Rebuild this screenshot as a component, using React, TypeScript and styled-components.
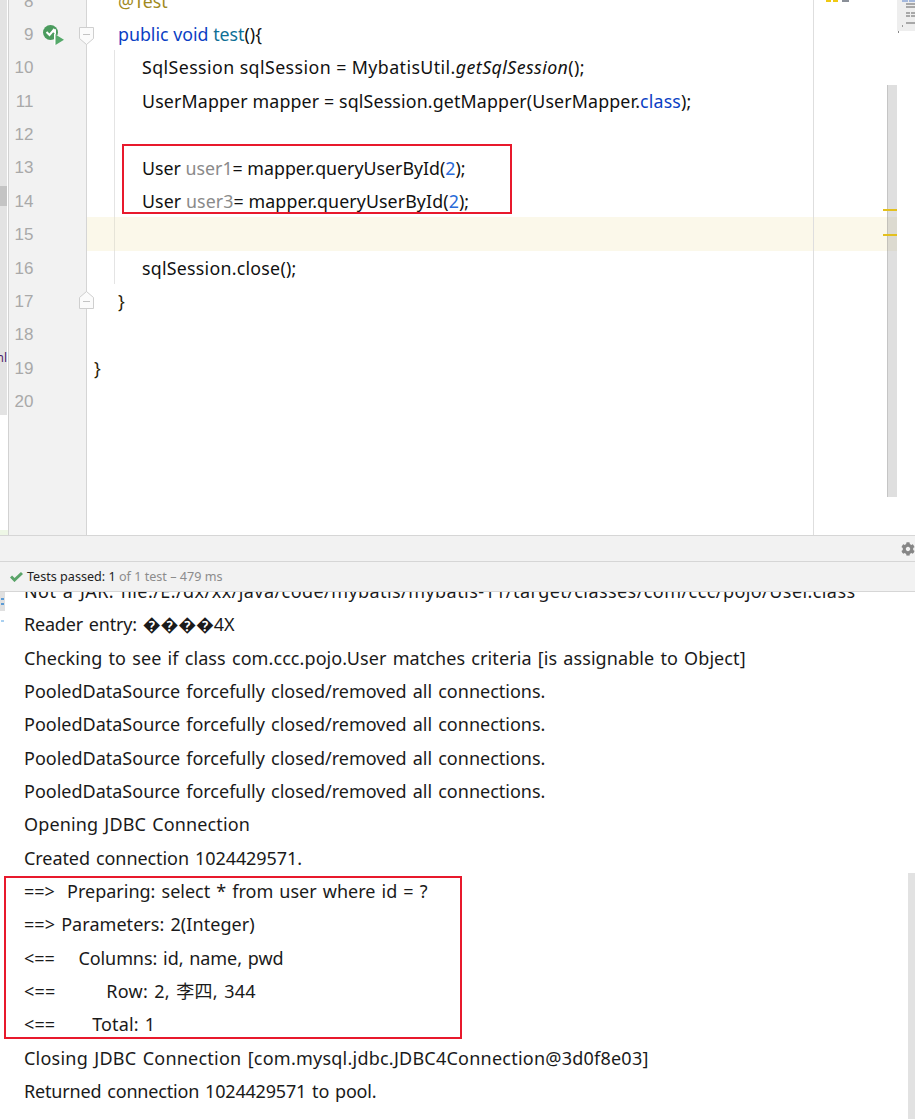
import React from "react";
import styled, { createGlobalStyle } from "styled-components";
import { FaCog } from "react-icons/fa";

const Global = createGlobalStyle`
  html, body { margin: 0; padding: 0; background: #fff; }
  body { width: 915px; height: 1119px; overflow: hidden; }
`;

const FONT = `"Noto Sans", "Noto Sans CJK SC", sans-serif`;

const Page = styled.div`
  position: relative;
  width: 915px;
  height: 1119px;
  overflow: hidden;
  display: flex;
  flex-direction: column;
  font-family: ${FONT};
  background: #fff;
`;

const Editor = styled.div`
  height: 535px;
  display: flex;
  overflow: hidden;
  flex: none;
`;

const SideColumn = styled.div`
  width: 8px;
  flex: none;
  display: flex;
  flex-direction: column;
  border-right: 1px solid #d2d2d2;
`;

const StripTop = styled.div`
  width: 7px;
  height: 186px;
  background: #e3e3e3;
`;

const StripThumb = styled.div`
  width: 7px;
  height: 20px;
  background: #c4c4c4;
`;

const StripBottom = styled.div`
  width: 7px;
  height: 209px;
  background: #e3e3e3;
  overflow: hidden;
  padding-top: 145px;
  box-sizing: border-box;
  font-size: 12px;
  line-height: 14px;
  color: #4a1a6a;
  direction: rtl;
`;

const StripSpacer = styled.div`
  flex: 1;
`;

const StripTint = styled.div`
  height: 5px;
  background: #eef7e6;
`;

const Gutter = styled.div`
  position: relative;
  z-index: 1;
  width: 77px;
  flex: none;
  background: #f2f2f2;
  border-right: 1px solid #d5d5d5;
`;

const GutterInner = styled.div`
  margin-top: -15.5px;
`;

const GutterRow = styled.div`
  height: 33.4px;
  display: flex;
  align-items: center;
`;

const LineNumber = styled.span`
  width: 24.5px;
  flex: none;
  text-align: right;
  font-family: "Liberation Sans", sans-serif;
  font-size: 17px;
  line-height: 33.4px;
  color: #a9a9a9;
`;

const RunIcon = styled.svg`
  flex: none;
  width: 22px;
  height: 21px;
  margin-left: 9.5px;
  margin-top: 1px;
`;

const FoldIcon = styled.svg<{ $left: number; $shift: number }>`
  flex: none;
  width: 15px;
  height: 18px;
  margin-left: ${(p) => p.$left}px;
  margin-top: ${(p) => p.$shift}px;
`;

const Code = styled.div`
  width: 726px;
  flex: none;
  border-right: 1px solid #dedede;
`;

const CodeInner = styled.div`
  margin-top: -16.3px;
`;

const CodeLine = styled.div<{ $indent: number; $track?: number }>`
  height: 33.4px;
  line-height: 35px;
  font-size: 17.8px;
  white-space: pre;
  color: #111;
  padding-left: ${(p) => p.$indent}px;
  letter-spacing: ${(p) => p.$track ?? 0}px;
`;

const MethodBody = styled.div`
  margin-left: 27px;
  padding-left: 27px;
  border-left: 1px solid #e4e4e4;
`;

const ActiveLine = styled.div`
  height: 33.4px;
  margin-left: -55px;
  background: linear-gradient(#e6e4d8, #e6e4d8) 27px 0 / 1px 100% no-repeat, #fbf8ea;
`;

const Kw = styled.span`color: #0b3fc4;`;
const Fn = styled.span`color: #0f6f96;`;
const Anno = styled.span`color: #a08a1e;`;
const Dim = styled.span`color: #8a8a8a;`;
const Num = styled.span`color: #2a6bd8;`;
const Static = styled.i`font-style: italic;`;
const Brace = styled.span`color: #2b1c05;`;

const RightPane = styled.div`
  position: relative;
  flex: 1;
  padding-top: 217px;
`;

const ActiveTail = styled.div`
  width: 83px;
  height: 34px;
  background: #fbf8ea;
`;

const ScrollThumb = styled.div`
  position: absolute;
  left: 73px;
  top: 85px;
  width: 10px;
  height: 412px;
  background: rgba(150, 150, 150, 0.3);
  border-left: 1px solid rgba(120, 120, 120, 0.25);
  box-sizing: border-box;
`;

const Marker = styled.div<{ $top: number }>`
  position: absolute;
  left: 69px;
  top: ${(p) => p.$top}px;
  width: 14px;
  height: 2px;
  background: #e3c01e;
`;

const TopIcons = styled.svg`
  position: absolute;
  left: 12px;
  top: 0;
  width: 24px;
  height: 3px;
`;

const Preview = styled.svg`
  position: absolute;
  left: 83px;
  top: 0;
  width: 18px;
  height: 33px;
`;

const ToolRow = styled.div`
  height: 25px;
  flex: none;
  display: flex;
  align-items: center;
  justify-content: flex-end;
  background: #f2f2f2;
  border-top: 1px solid #d6d6d6;
  border-bottom: 1px solid #d6d6d6;
  color: #868686;
  font-size: 14px;
`;

const StatusRow = styled.div`
  height: 29px;
  flex: none;
  display: flex;
  align-items: center;
  gap: 4px;
  padding-left: 10px;
  background: #f2f2f2;
  border-bottom: 1px solid #d6d6d6;
  font-size: 12.6px;
  color: #222;
`;

const Muted = styled.span`color: #8c8c8c;`;

const Console = styled.div`
  position: relative;
  flex: 1;
  overflow: hidden;
`;

const ConsoleInner = styled.div`
  margin-top: -17px;
  padding-left: 24px;
`;

const LogLine = styled.div<{ $track: number }>`
  height: 33.35px;
  line-height: 33.35px;
  font-size: 18px;
  word-spacing: 1.4px;
  letter-spacing: ${(p) => p.$track}px;
  white-space: pre;
  color: #1a1a1a;
`;

const ConsoleEdge = styled.svg`
  position: absolute;
  left: 0;
  top: 0;
  width: 5px;
  height: 36px;
`;

const ConsoleScroll = styled.div`
  position: absolute;
  left: 908px;
  top: 281px;
  width: 7px;
  bottom: 0;
  background: #e2e2e2;
`;

const RedBox = styled.div<{ $x: number; $y: number; $w: number; $h: number }>`
  position: absolute;
  left: ${(p) => p.$x}px;
  top: ${(p) => p.$y}px;
  width: ${(p) => p.$w}px;
  height: ${(p) => p.$h}px;
  box-sizing: border-box;
  border: 2px solid #e8192c;
`;

const Fold = ({ up, left, shift }: { up?: boolean; left: number; shift: number }) => (
  <FoldIcon $left={left} $shift={shift} viewBox="0 0 15 18">
    {up ? (
      <path d="M.5 17.500V6.500L7.500 .5l7 6v11z" fill="#fbfbfb" stroke="#cfcfcf" />
    ) : (
      <path d="M.5 .5v11l7 6 7-6V.5z" fill="#fbfbfb" stroke="#cfcfcf" />
    )}
    <path d={up ? "M4 10.500h7" : "M4 7.500h7"} stroke="#c4c4c4" />
  </FoldIcon>
);

const logs: { text: string; track: number }[] = [
  { text: "Not a JAR: file:/E:/dx/xx/java/code/mybatis/mybatis-11/target/classes/com/ccc/pojo/User.class", track: 0.43 },
  { text: "Reader entry: \uFFFD\uFFFD\uFFFD\uFFFD4X", track: -0.2 },
  { text: "Checking to see if class com.ccc.pojo.User matches criteria [is assignable to Object]", track: 0.08 },
  { text: "PooledDataSource forcefully closed/removed all connections.", track: 0 },
  { text: "PooledDataSource forcefully closed/removed all connections.", track: 0 },
  { text: "PooledDataSource forcefully closed/removed all connections.", track: 0 },
  { text: "PooledDataSource forcefully closed/removed all connections.", track: 0 },
  { text: "Opening JDBC Connection", track: 0.13 },
  { text: "Created connection 1024429571.", track: -0.07 },
  { text: "==>  Preparing: select * from user where id = ?", track: 0 },
  { text: "==> Parameters: 2(Integer)", track: 0.05 },
  { text: "<==    Columns: id, name, pwd", track: -0.1 },
  { text: "<==        Row: 2, 李四, 344", track: 0.25 },
  { text: "<==      Total: 1", track: 0.1 },
  { text: "Closing JDBC Connection [com.mysql.jdbc.JDBC4Connection@3d0f8e03]", track: 0.23 },
  { text: "Returned connection 1024429571 to pool.", track: -0.18 },
];

export default function App() {
  const numbers = [8, 9, 10, 11, 12, 13, 14, 15, 16, 17, 18, 19, 20];
  return (
    <Page>
      <Global />
      <Editor>
        <SideColumn>
          <StripTop />
          <StripThumb />
          <StripBottom>nl</StripBottom>
          <StripSpacer />
          <StripTint />
        </SideColumn>
        <Gutter>
          <GutterInner>
            {numbers.map((n) => (
              <GutterRow key={n}>
                <LineNumber>{n}</LineNumber>
                {n === 9 && (
                  <>
                    <RunIcon viewBox="0 0 22 21">
                      <circle cx="7.500" cy="7.500" r="7.500" fill="#4b9b5e" />
                      <path d="M3.500 7l3 3 5-6" fill="none" stroke="#fff" strokeWidth="2" />
                      <path d="M9 6l4-2v6z" fill="#fff" />
                      <path d="M11 8.500l10 6-10 6z" fill="#fff" />
                      <path d="M12.500 9.500l8.500 5.200-8.500 5.300z" fill="#55a96a" />
                    </RunIcon>
                    <Fold left={13.500} shift={3} />
                  </>
                )}
                {n === 17 && <Fold up left={45} shift={-4} />}
              </GutterRow>
            ))}
          </GutterInner>
        </Gutter>
        <Code>
          <CodeInner>
            <CodeLine $indent={31}><Anno>@Test</Anno></CodeLine>
            <CodeLine $indent={31}><Kw>public void </Kw><Fn>test</Fn>(){"{"}</CodeLine>
            <MethodBody>
              <CodeLine $indent={0} $track={0.42}>SqlSession sqlSession = MybatisUtil.<Static>getSqlSession</Static>();</CodeLine>
              <CodeLine $indent={0} $track={0.15}>UserMapper mapper = sqlSession.getMapper(UserMapper.<Kw>class</Kw>);</CodeLine>
              <CodeLine $indent={0} />
              <CodeLine $indent={0}>User <Dim>user1</Dim>= mapper.queryUserById(<Num>2</Num>);</CodeLine>
              <CodeLine $indent={0} $track={0.1}>User <Dim>user3</Dim>= mapper.queryUserById(<Num>2</Num>);</CodeLine>
              <ActiveLine />
              <CodeLine $indent={0} $track={0.25}>sqlSession.close();</CodeLine>
            </MethodBody>
            <CodeLine $indent={31}><Brace>{"}"}</Brace></CodeLine>
            <CodeLine $indent={0} />
            <CodeLine $indent={7}><Brace>{"}"}</Brace></CodeLine>
          </CodeInner>
        </Code>
        <RightPane>
          <ActiveTail />
          <ScrollThumb />
          <Marker $top={209} />
          <Marker $top={234} />
          <TopIcons viewBox="0 0 24 3">
            <rect x="0" y="0" width="12" height="2" fill="#efc913" />
            <rect x="5" y="0" width="2" height="2" fill="#fff" />
            <rect x="16" y="0" width="7" height="2" fill="#8a8f98" />
          </TopIcons>
          <Preview viewBox="0 0 18 33">
            <rect x="0" y="0" width="18" height="31" fill="#eeeeee" />
            <rect x="5" y="0" width="6" height="2" fill="#a4b8dc" />
            <rect x="12" y="0" width="6" height="2" fill="#a4b8dc" />
            <rect x="9" y="3" width="9" height="2" fill="#a8a8a8" />
            <rect x="9" y="6" width="9" height="2" fill="#a8a8a8" />
            <rect x="9" y="12" width="4" height="2" fill="#a8a8a8" />
            <rect x="14" y="12" width="4" height="2" fill="#a8a8a8" />
            <rect x="9" y="15" width="4" height="2" fill="#a8a8a8" />
            <rect x="14" y="15" width="4" height="2" fill="#a8a8a8" />
            <rect x="9" y="22" width="9" height="2" fill="#a8a8a8" />
            <rect x="5" y="25" width="1" height="2" fill="#999" />
            <rect x="1" y="31" width="1" height="2" fill="#888" />
          </Preview>
        </RightPane>
      </Editor>
      <ToolRow>
        <FaCog />
      </ToolRow>
      <StatusRow>
        <svg width="13" height="11" viewBox="0 0 13 11">
          <path d="M1 5.500l3.500 3.500L12 2" fill="none" stroke="#5aa469" strokeWidth="3" />
        </svg>
        <span>Tests passed: 1 <Muted>of 1 test – 479 ms</Muted></span>
      </StatusRow>
      <Console>
        <ConsoleInner>
          {logs.map((l, i) => (
            <LogLine key={i} $track={l.track}>{l.text}</LogLine>
          ))}
        </ConsoleInner>
        <ConsoleEdge viewBox="0 0 5 36">
          <rect x="0" y="0" width="5" height="19" fill="#e0e0e0" />
          <rect x="1" y="6" width="3" height="2" fill="#5b9bd5" />
          <rect x="1" y="11" width="3" height="2" fill="#5b9bd5" />
          <rect x="1" y="28" width="3" height="2" fill="#a9d0f0" />
        </ConsoleEdge>
        <ConsoleScroll />
        <RedBox $x={4} $y={284} $w={458} $h={163} />
      </Console>
      <RedBox $x={122} $y={144} $w={390} $h={70} />
    </Page>
  );
}
